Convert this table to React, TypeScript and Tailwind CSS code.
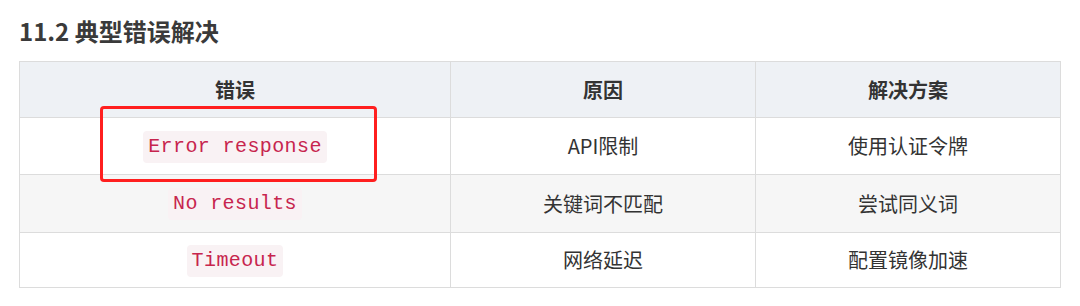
import React from 'react'

const rows = [
  { code: 'Error response', reason: 'API限制', fix: '使用认证令牌', h: 'h-[57px]', bg: 'bg-white' },
  { code: 'No results', reason: '关键词不匹配', fix: '尝试同义词', h: 'h-[58px]', bg: 'bg-[#f6f6f6]' },
  { code: 'Timeout', reason: '网络延迟', fix: '配置镜像加速', h: 'h-[55px]', bg: 'bg-white' },
]

const cjk = { fontFamily: '"Noto Sans CJK SC", "Noto Sans", sans-serif' }

function Cell({ children, className }: { children: React.ReactNode; className?: string }) {
  return (
    <div
      className={`flex items-center justify-center border-r border-b border-[#dcdcdc] text-[20px] text-[#333] ${className ?? ''}`}
    >
      {children}
    </div>
  )
}

function Code({ children }: { children: React.ReactNode }) {
  return (
    <code
      className="mt-px rounded-[4px] bg-[#f9f2f4] px-[5px] text-[20px] leading-[32px] tracking-[0.4px] text-[#c7254e]"
      style={{ fontFamily: '"Liberation Mono", monospace' }}
    >
      {children}
    </code>
  )
}

export default function App() {
  return (
    <div className="relative h-[306px] w-[1080px] bg-white" style={cjk}>
      <div className="pt-[15px] pl-[19px]">
        <h3 className="text-[24px] leading-[32px] font-bold text-[#3a3a3a]">11.2 典型错误解决</h3>
      </div>
      <div className="mt-[14px] ml-[19px] grid w-[1042px] grid-cols-[431px_305px_305px] border-t border-l border-[#dcdcdc]">
        <Cell className="h-[56px] bg-[#eef1f5] font-bold">错误</Cell>
        <Cell className="h-[56px] bg-[#eef1f5] font-bold">原因</Cell>
        <Cell className="h-[56px] bg-[#eef1f5] font-bold">解决方案</Cell>
        {rows.map((r) => (
          <React.Fragment key={r.code}>
            <Cell className={`${r.h} ${r.bg}`}>
              <Code>{r.code}</Code>
            </Cell>
            <Cell className={`${r.h} ${r.bg}`}>{r.reason}</Cell>
            <Cell className={`${r.h} ${r.bg}`}>{r.fix}</Cell>
          </React.Fragment>
        ))}
      </div>
      {/* annotation box */}
      <div className="absolute top-[106px] left-[100px] h-[76px] w-[277px] rounded-[4px] border-[3px] border-[#ff1f1f]" />
    </div>
  )
}
